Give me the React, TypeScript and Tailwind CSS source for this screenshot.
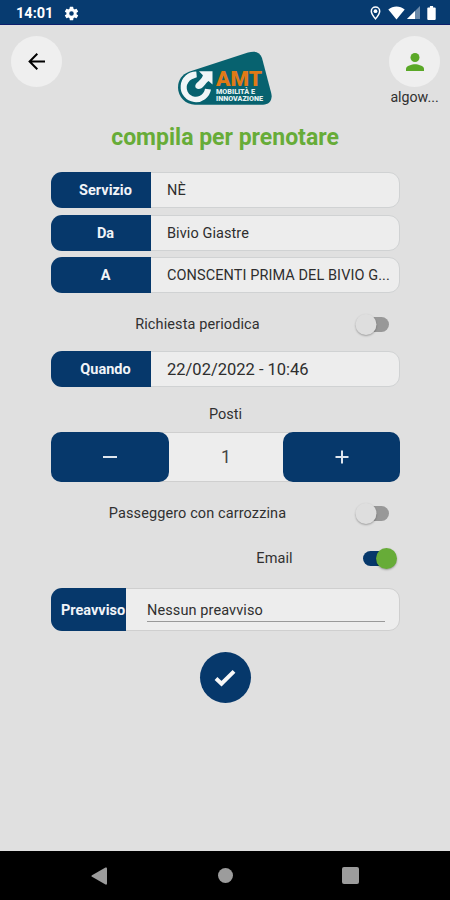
import { useState } from 'react';
import type { ReactNode } from 'react';

const Logo = () => (
  <svg width="94" height="54" viewBox="0 0 94 54" className="block">
    <path
      d="M17 53.7C7.5 53.7 0 45.5 0 36.5C0 29 4 23.5 11 20.8L70 1.6C77-.6 82 1 84 7L93.2 42C95 49 91 53.7 85 53.7Z"
      fill="#07626f"
    />
    <path
      d="M18.300 20.600A15.300 15.300 0 1 0 33 38.500L27 37.800A9.200 9.200 0 1 1 13.800 28.300L18.800 26.200Z"
      fill="#f1f6f7"
    />
    <path d="M21 20.300H34.500V33.500L30.600 29.900C27 32.500 25 38 20.500 38C17 38 16.500 34.500 18.500 32.300C20.500 30.200 24 28 24.900 24.300Z" fill="#f1f6f7" />
    <text x="38" y="35" fontFamily="Roboto, sans-serif" fontWeight="900" fontSize="21" textLength="46" lengthAdjust="spacingAndGlyphs" fill="#e07a17">AMT</text>
    <text x="38" y="42.800" fontFamily="Roboto, sans-serif" fontWeight="900" fontSize="6.5" textLength="39" lengthAdjust="spacingAndGlyphs" fill="#e4f0f1">MOBILITÀ E</text>
    <text x="38" y="49.800" fontFamily="Roboto, sans-serif" fontWeight="900" fontSize="6.5" textLength="47" lengthAdjust="spacingAndGlyphs" fill="#e4f0f1">INNOVAZIONE</text>
  </svg>
);

const StatusBar = () => (
  <div className="flex h-[25px] shrink-0 items-center justify-between border-b border-[#0c1f6c] bg-[#073b70] pl-4 pr-[14px] text-white">
    <div className="flex items-center gap-3">
      <span className="w-9 whitespace-nowrap pt-[4px] text-[14.5px] font-bold leading-none">14:01</span>
      <svg width="17" height="17" viewBox="0 0 24 24" fill="currentColor" className="-ml-px mt-[2px]">
        <path d="M19.14 12.94c.04-.3.06-.61.06-.94 0-.32-.02-.64-.07-.94l2.03-1.58a.49.49 0 0 0 .12-.61l-1.92-3.32a.49.49 0 0 0-.59-.22l-2.39.96a7 7 0 0 0-1.62-.94l-.36-2.54a.48.48 0 0 0-.48-.41h-3.84a.48.48 0 0 0-.47.41l-.36 2.54c-.59.24-1.13.57-1.62.94l-2.39-.96a.48.48 0 0 0-.59.22L2.74 8.87a.48.48 0 0 0 .12.61l2.03 1.58c-.05.3-.09.63-.09.94s.02.64.07.94l-2.03 1.58a.49.49 0 0 0-.12.61l1.92 3.32c.12.22.37.29.59.22l2.39-.96c.5.38 1.03.7 1.62.94l.36 2.54c.05.24.24.41.48.41h3.84c.24 0 .44-.17.47-.41l.36-2.54a7 7 0 0 0 1.62-.94l2.39.96c.22.08.47 0 .59-.22l1.92-3.32a.48.48 0 0 0-.12-.61zM12 15.2a3.2 3.2 0 1 1 0-6.4 3.2 3.2 0 0 1 0 6.4z" />
      </svg>
    </div>
    <div className="flex items-center pt-px">
      <svg width="11" height="14" viewBox="0 0 11 15" fill="none" stroke="currentColor" className="mr-[7px]">
        <path d="M5.5 13.8C3 10.8 1 8.2 1 5.6a4.5 4.5 0 0 1 9 0c0 2.6-2 5.2-4.5 8.2z" strokeWidth="1.6" />
        <circle cx="5.5" cy="5.5" r="2" fill="currentColor" stroke="none" />
      </svg>
      <svg width="17" height="14" viewBox="0 0 17 14" fill="currentColor" className="mr-0.5">
        <path d="M.3 3.6C5-.4 12-.4 16.7 3.6L8.5 13.6z" />
      </svg>
      <svg width="13" height="13" viewBox="0 0 13 13" fill="currentColor" className="mr-[7px]">
        <path d="M13 0v13H0z" opacity=".4" />
        <path d="M8 5v8H0z" />
      </svg>
      <svg width="9" height="14" viewBox="0 0 9 15" fill="currentColor">
        <path d="M2.8 0h3.4v1.5H8c.6 0 1 .4 1 1V14c0 .6-.4 1-1 1H1c-.6 0-1-.4-1-1V2.500c0-.6.4-1 1-1h1.8z" />
      </svg>
    </div>
  </div>
);

interface FieldProps {
  label: string;
  children: ReactNode;
  large?: boolean;
}

const Field = ({ label, children, large }: FieldProps) => (
  <div className="flex h-[36px] rounded-[11px] border border-[#d0d2d3] bg-[#ededed]">
    <div className="-my-px -ml-px flex w-[100px] shrink-0 items-center justify-center rounded-l-[11px] bg-[#06386b] pl-[9px] pt-[2px] text-[14.5px] font-bold text-[#f1f4f8]">
      {label}
    </div>
    <div className={`flex min-w-0 flex-1 items-center whitespace-nowrap pl-4 pt-[2px] text-[#2e2e2e] ${large ? 'text-[16.5px]' : 'text-[14.5px] tracking-[0.08px]'}`}>
      {children}
    </div>
  </div>
);

interface SwitchProps {
  checked: boolean;
  onChange: () => void;
}

const Switch = ({ checked, onChange }: SwitchProps) => (
  <button
    onClick={onChange}
    className={`flex h-[15px] w-[27px] items-center rounded-full ${checked ? 'bg-[#06386b]' : 'bg-[#989898]'}`}
  >
    <span
      className={`h-[21px] w-[21px] shrink-0 rounded-full shadow-[0_1px_2px_rgba(0,0,0,0.3)] ${
        checked ? 'translate-x-[13px] bg-[#67ac38]' : '-translate-x-[6.5px] bg-[#dedede]'
      }`}
    />
  </button>
);

const App = () => {
  const [periodic, setPeriodic] = useState(false);
  const [wheelchair, setWheelchair] = useState(false);
  const [email, setEmail] = useState(true);
  const [seats, setSeats] = useState(1);

  return (
    <div className="flex h-[900px] w-[450px] flex-col overflow-hidden bg-[#e0e0e0] font-['Roboto',sans-serif] text-[#303030]">
      <StatusBar />

      <main className="flex flex-1 flex-col">
        <header className="flex h-[83px] items-start justify-between pl-[11px] pr-[10px] pt-[11px]">
          <button className="flex h-[51px] w-[51px] items-center justify-center rounded-full bg-[#efefef] text-black">
            <svg width="18" height="18" viewBox="0 0 18 18" fill="none" stroke="currentColor" strokeWidth="2">
              <path d="M17 8.500H2M9.300.700L1.600 8.500l7.700 7.800" />
            </svg>
          </button>
          <div className="mr-[1px] pt-[15px]">
            <Logo />
          </div>
          <div className="flex w-[51px] flex-col items-center">
            <div className="flex h-[51px] w-[51px] items-center justify-center rounded-full bg-[#efefef]">
              <svg width="18" height="18" viewBox="0 0 18 18" fill="#5aa827">
                <circle cx="9" cy="4.500" r="4.500" />
                <path d="M0 18v-2.300c0-3 6-4.500 9-4.500s9 1.500 9 4.500V18z" />
              </svg>
            </div>
            <span className="text-[14.2px] leading-5">algow...</span>
          </div>
        </header>

        <h1 className="mt-[14px] text-center text-[23px] font-bold leading-8 text-[#67ac38]">compila per prenotare</h1>

        <div className="ml-[51px] mt-[18px] flex w-[349px] flex-col">
          <div className="flex flex-col gap-[6.500px]">
            <Field label="Servizio">NÈ</Field>
            <Field label="Da">Bivio Giastre</Field>
            <Field label="A">CONSCENTI PRIMA DEL BIVIO G...</Field>
          </div>

          <div className="flex h-[58px] items-center pt-[5px]">
            <span className="w-[293px] text-center text-[14.5px] tracking-[0.1px]">Richiesta periodica</span>
            <div className="ml-[18px]">
              <Switch checked={periodic} onChange={() => setPeriodic(!periodic)} />
            </div>
          </div>

          <Field label="Quando" large>22/02/2022 - 10:46</Field>

          <p className="mt-[18px] text-center text-[14.5px] leading-5">Posti</p>
          <div className="mt-[7px] flex h-[50px] items-stretch rounded-[10px] border border-[#cfcfcf] bg-[#ededed]">
            <button
              onClick={() => setSeats(Math.max(1, seats - 1))}
              className="-my-px -ml-px flex w-[118px] items-center justify-center rounded-[10px] bg-[#06386b]"
            >
              <span className="h-[2px] w-[14px] bg-[#dfe6ee]" />
            </button>
            <span className="flex flex-1 items-center justify-center text-[17.5px] text-[#444]">{seats}</span>
            <button
              onClick={() => setSeats(seats + 1)}
              className="-my-px -mr-px flex w-[117px] items-center justify-center rounded-[10px] bg-[#06386b]"
            >
              <svg width="14" height="14" viewBox="0 0 14 14" stroke="#dfe6ee" strokeWidth="2">
                <path d="M7 .500v13M.500 7h13" />
              </svg>
            </button>
          </div>

          <div className="mt-2 flex h-[46px] items-center">
            <span className="w-[293px] pt-[2px] text-center text-[14.5px] tracking-[0.1px]">Passeggero con carrozzina</span>
            <div className="ml-[18px]">
              <Switch checked={wheelchair} onChange={() => setWheelchair(!wheelchair)} />
            </div>
          </div>
          <div className="flex h-[44px] items-center">
            <span className="ml-[155px] w-[137px] pt-[2px] text-center text-[14.5px] tracking-[0.1px]">Email</span>
            <div className="ml-5">
              <Switch checked={email} onChange={() => setEmail(!email)} />
            </div>
          </div>

          <div className="mt-2 flex h-[43px] rounded-[11px] border border-[#cfcfcf] bg-[#ededed]">
            <div className="-my-px -ml-px flex w-[75px] shrink-0 items-center whitespace-nowrap rounded-l-[11px] bg-[#06386b] pl-[10px] pt-[2px] text-[14.5px] font-bold text-[#f1f4f8]">
              Preavviso
            </div>
            <div className="ml-[21px] mr-[14px] mt-[7px] h-[26px] flex-1 border-b border-[#999] text-[14.5px] leading-[29px] tracking-[0.1px]">
              Nessun preavviso
            </div>
          </div>
        </div>

        <button className="mt-[21px] flex h-[51px] w-[51px] items-center justify-center self-center rounded-full bg-[#06386b]">
          <svg width="22" height="18" viewBox="0 0 22 18" fill="none" stroke="#f8f8f8" strokeWidth="4">
            <path d="M2 9.500l5.500 5.200L20 2.400" />
          </svg>
        </button>
      </main>

      <nav className="flex h-[49px] shrink-0 items-center justify-between bg-black pl-[91px] pr-[91px]">
        <svg width="17" height="18" viewBox="0 0 17 18" fill="#9c9c9c">
          <path d="M1 8.200L14.500.5q1.500-.5 1.500 1v15q0 1.500-1.500 1L1 9.800q-1.200-.8 0-1.600z" />
        </svg>
        <span className="h-[15px] w-[15px] rounded-full bg-[#9c9c9c]" />
        <span className="h-[17px] w-[17px] rounded-[2px] bg-[#9c9c9c]" />
      </nav>
    </div>
  );
};

export default App;
